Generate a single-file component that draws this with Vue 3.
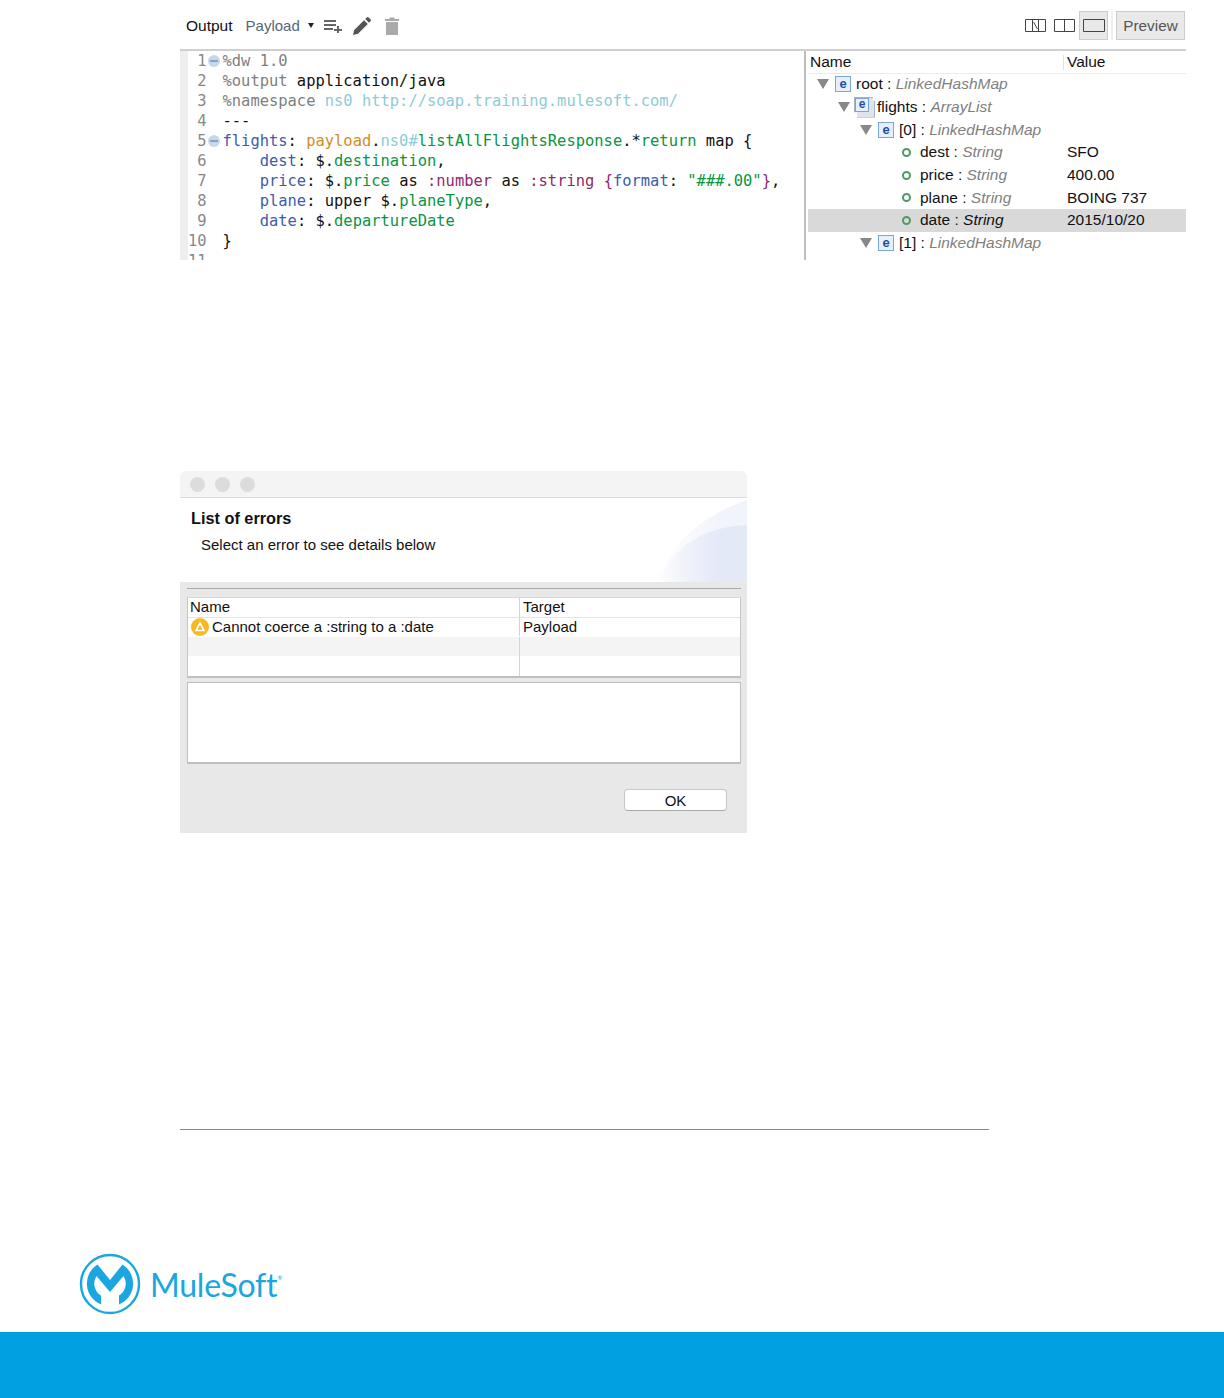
<script setup>
const code = [
  { n: '1', fold: true, t: [['g', '%dw 1.0']] },
  { n: '2', t: [['g', '%output '], ['k', 'application/java']] },
  { n: '3', t: [['g', '%namespace '], ['c', 'ns0 http://soap.training.mulesoft.com/']] },
  { n: '4', t: [['k', '---']] },
  { n: '5', fold: true, t: [['b', 'flights'], ['k', ': '], ['o', 'payload'], ['k', '.'], ['c', 'ns0'], ['c', '#'], ['v', 'listAllFlightsResponse'], ['k', '.*'], ['v', 'return'], ['k', ' map {']] },
  { n: '6', t: [['k', '    '], ['b', 'dest'], ['k', ': $.'], ['v', 'destination'], ['k', ',']] },
  { n: '7', t: [['k', '    '], ['b', 'price'], ['k', ': $.'], ['v', 'price'], ['k', ' as '], ['p', ':number'], ['k', ' as '], ['p', ':string {'], ['b', 'format'], ['k', ': '], ['v', '"###.00"'], ['p', '}'], ['k', ',']] },
  { n: '8', t: [['k', '    '], ['b', 'plane'], ['k', ': upper $.'], ['v', 'planeType'], ['k', ',']] },
  { n: '9', t: [['k', '    '], ['b', 'date'], ['k', ': $.'], ['v', 'departureDate']] },
  { n: '10', t: [['k', '}']] },
  { n: '11', t: [] },
]
const tree = [
  { icon: 'e', arrow: true, indent: 9, name: 'root', type: 'LinkedHashMap' },
  { icon: 'list', arrow: true, indent: 30, name: 'flights', type: 'ArrayList' },
  { icon: 'e', arrow: true, indent: 52, name: '[0]', type: 'LinkedHashMap' },
  { icon: 'dot', indent: 94, name: 'dest', type: 'String', value: 'SFO' },
  { icon: 'dot', indent: 94, name: 'price', type: 'String', value: '400.00' },
  { icon: 'dot', indent: 94, name: 'plane', type: 'String', value: 'BOING 737' },
  { icon: 'dot', indent: 94, name: 'date', type: 'String', value: '2015/10/20', selected: true },
  { icon: 'e', arrow: true, indent: 52, name: '[1]', type: 'LinkedHashMap' },
  { icon: 'dot', indent: 94, name: 'dest', type: 'String', value: 'LAX' },
]
</script>

<template>
  <div class="page">
    <section class="shot">
      <div class="toolbar">
        <span class="out">Output</span>
        <span class="payload">Payload</span>
        <span class="caret"></span>
        <svg class="ic add" width="19" height="14" viewBox="0 0 19 14"><path d="M0 1h12v2H0zM0 5h12v2H0zM0 9h9v2H0zM13 7h2v3h3v2h-3v2h-2v-2h-3v-2h3z" fill="#666"/></svg>
        <svg class="ic pen" width="18" height="18" viewBox="0 0 18 18"><path d="M0 18l1.200-5L11 3.200l3.800 3.800L5 16.800zM12.200 2L14 .3a1 1 0 0 1 1.400 0l2.300 2.300a1 1 0 0 1 0 1.400L16 5.800z" fill="#555"/></svg>
        <svg class="ic bin" width="14" height="18" viewBox="0 0 14 18"><path d="M0 2h4.500V.5h5V2H14v2H0zM1 5h12v13H1z" fill="#aaa"/></svg>
        <div class="spacer"></div>
        <svg class="view" width="21" height="13" viewBox="0 0 21 13"><path d="M.5.5h20v12H.5zM7.500.5v12M13.500.5v12M8.500 3l4 7" fill="none" stroke="#444"/></svg>
        <svg class="view v2" width="21" height="13" viewBox="0 0 21 13"><path d="M.5.5h20v12H.5zM10.500.5v12" fill="none" stroke="#444"/></svg>
        <div class="selected-view"><svg width="22" height="13" viewBox="0 0 22 13"><path d="M.5.5h21v12H.5z" fill="none" stroke="#444"/></svg></div>
        <div class="divider"></div>
        <div class="preview">Preview</div>
      </div>
      <div class="panes">
        <div class="editor">
          <div v-for="l in code" :key="l.n" class="cl">
            <span class="num">{{ l.n }}</span>
            <span class="fold"><i v-if="l.fold"></i></span>
            <span class="src"><span v-for="(s, i) in l.t" :key="i" :class="'t-' + s[0]">{{ s[1] }}</span></span>
          </div>
        </div>
        <div class="tree">
          <div class="thead"><span class="tname">Name</span><span class="tval">Value</span></div>
          <div v-for="(r, i) in tree" :key="i" class="row" :class="{ sel: r.selected }">
            <div class="rname" :style="{ paddingLeft: r.indent + 'px' }">
              <span v-if="r.arrow" class="tri"></span>
              <span v-if="r.icon === 'e'" class="elem">e</span>
              <span v-else-if="r.icon === 'list'" class="list"><span class="elem small">e</span></span>
              <span v-else class="dot"></span>
              <span class="lbl">{{ r.name }} : <em>{{ r.type }}</em></span>
            </div>
            <div class="rval">{{ r.value }}</div>
          </div>
        </div>
      </div>
    </section>

    <section class="dialog">
      <div class="titlebar"><i></i><i></i><i></i></div>
      <div class="dhead">
        <h3>List of errors</h3>
        <p>Select an error to see details below</p>
        <svg class="swoosh" width="92" height="84" viewBox="0 0 92 84">
          <defs>
            <linearGradient id="sw" x1="0" x2="1" y1="0" y2="0"><stop offset="0" stop-color="#e6ebf8" stop-opacity="0"/><stop offset=".7" stop-color="#e4e9f8"/></linearGradient>
          </defs>
          <path d="M0 84C14 50 44 18 92 2V84z" fill="url(#sw)" opacity=".5"/>
          <path d="M2 84C18 46 54 28 92 27V84z" fill="url(#sw)"/>
        </svg>
      </div>
      <div class="dbody">
        <div class="rule"></div>
        <div class="table">
          <div class="tr head"><span class="c1">Name</span><span class="c2">Target</span></div>
          <div class="tr main">
            <span class="c1 err">
              <svg width="18" height="18" viewBox="0 0 18 18"><circle cx="9" cy="9" r="9" fill="#f5b921"/><path d="M9 5l4 7.500H5z" fill="none" stroke="#fff" stroke-width="1.600"/></svg>
              Cannot coerce a :string to a :date
            </span>
            <span class="c2">Payload</span>
          </div>
          <div class="tr alt"><span class="c1"></span><span class="c2"></span></div>
          <div class="tr last"><span class="c1"></span><span class="c2"></span></div>
        </div>
        <div class="details"></div>
        <div class="actions"><button class="ok">OK</button></div>
      </div>
    </section>

    <div class="hr"></div>

    <div class="logo">
      <svg width="62" height="62" viewBox="0 0 62 62">
        <circle cx="31" cy="31" r="29" fill="none" stroke="#1ba6e0" stroke-width="2.400"/>
        <path d="M22 51.500A22.500 22.500 0 0 1 18.500 11.500L31 27l12.500-15.500A22.500 22.500 0 0 1 40 51.500V42.500A14 14 0 0 0 44.500 23L31 39 17.500 23A14 14 0 0 0 22 42.500z" fill="#1ba6e0"/>
      </svg>
      <span class="brand">MuleSoft<sup>®</sup></span>
    </div>
    <div class="bar"></div>
  </div>
</template>

<style scoped>
.page { width: 1224px; height: 1398px; background: #fff; display: flex; flex-direction: column; font-family: "Liberation Sans", Arial, sans-serif; color: #111; overflow: hidden; }
.shot { margin-left: 180px; width: 1006px; height: 260px; display: flex; flex-direction: column; }
.toolbar { height: 50px; flex: none; display: flex; align-items: center; font-size: 15px; box-sizing: border-box; padding-top: 1px; }
.out { margin-left: 6px; font-size: 15.500px; }
.payload { margin-left: 13px; color: #56667a; }
.caret { margin-left: 8px; width: 0; height: 0; border: 3.500px solid transparent; border-top: 5px solid #222; border-bottom: 0; }
.ic.add { margin-left: 10px; }
.ic.pen { margin-left: 10px; }
.ic.bin { margin-left: 14px; }
.spacer { flex: 1; }
.view { display: block; }
.v2 { margin-left: 8px; }
.selected-view { margin-left: 4px; width: 29px; height: 29px; box-sizing: border-box; background: #e8e8e8; border: 1px solid #ccc; display: flex; align-items: center; justify-content: center; }
.divider { margin-left: 3px; width: 2px; height: 29px; background: #eee; }
.preview { margin-left: 3px; margin-right: 1px; width: 69px; height: 29px; box-sizing: border-box; background: #e9e9e9; border: 1px solid #ccc; display: flex; align-items: center; justify-content: center; color: #555; font-size: 15.300px; }

.panes { flex: 1; min-height: 0; display: flex; border-top: 2px solid #cfcfcf; margin-top: -1px; overflow: hidden; }
.editor { width: 624px; flex: none; box-sizing: border-box; border-left: 8px solid #eeeeee; font-family: "DejaVu Sans Mono", monospace; font-size: 15.450px; }
.cl { display: flex; height: 20px; line-height: 20px; white-space: pre; }
.num { width: 18.500px; text-align: right; color: #888; flex: none; }
.fold { width: 16px; flex: none; display: flex; align-items: center; padding-left: 1px; box-sizing: border-box; }
.fold i { display: block; width: 12px; height: 12px; border-radius: 50%; background: #c6d9ec linear-gradient(#86a3c4, #86a3c4) center / 8px 2px no-repeat; }
.t-g { color: #7f7f7f; }
.t-k { color: #111; }
.t-c { color: #8ecbd6; }
.t-b { color: #3d5cac; }
.t-o { color: #d28d26; }
.t-v { color: #0a9440; }
.t-p { color: #8f2a6e; }

.tree { flex: 1; min-width: 0; border-left: 2px solid #bdbdbd; padding-left: 2px; font-size: 15.500px; }
.thead { display: flex; height: 21px; border-bottom: 1px solid #ececec; padding-top: 1px; box-sizing: content-box; }
.tname { width: 256px; padding-left: 2px; box-sizing: border-box; line-height: 20px; position: relative; }
.tname::after { content: ""; position: absolute; right: 0; top: 3px; width: 1px; height: 15px; background: #e2e2e2; }
.tval { padding-left: 3px; line-height: 20px; }
.row { display: flex; height: 22.700px; align-items: center; }
.row:nth-child(2) { margin-top: -1px; }
.row.sel { background: #d9d9d9; }
.rname { width: 260px; display: flex; align-items: center; box-sizing: border-box; flex: none; white-space: nowrap; }
.rval { white-space: nowrap; margin-left: -1px; }
.tri { width: 0; height: 0; border-left: 6px solid transparent; border-right: 6px solid transparent; border-top: 10px solid #888; margin-right: 6px; }
.elem { width: 16px; height: 16px; box-sizing: border-box; border: 1px solid #7aa6d8; background: #e6f0fb; color: #1f4fa0; font-size: 13px; font-weight: 700; line-height: 13px; text-align: center; display: block; margin-right: 5px; flex: none; }
.list { position: relative; width: 21px; height: 21px; margin-left: -2px; margin-right: 2px; background: #dfe4ec; border: 1px solid #a9b2c0; box-sizing: border-box; flex: none; clip-path: polygon(0 0, 90% 0, 90% 20%, 100% 20%, 100% 100%, 15% 100%, 15% 75%, 0 75%); }
.elem.small { position: absolute; left: 0; top: 0; width: 14px; height: 14px; font-size: 12px; line-height: 11px; margin: 0; }
.dot { width: 9px; height: 9px; box-sizing: border-box; border: 2.500px solid #4c9a66; border-radius: 50%; margin-right: 9px; flex: none; }
.lbl em { color: #808080; font-style: italic; }
.row.sel em { color: #111; }

.dialog { margin-top: 211px; margin-left: 180px; width: 567px; height: 362px; flex: none; display: flex; flex-direction: column; border-radius: 6px 6px 0 0; overflow: hidden; font-size: 15px; }
.titlebar { height: 27px; flex: none; box-sizing: border-box; background: #f4f4f4; border-bottom: 1px solid #dcdcdc; display: flex; align-items: center; gap: 10px; padding-left: 10px; }
.titlebar i { width: 15px; height: 15px; border-radius: 50%; background: #dcdcdc; }
.dhead { height: 84px; flex: none; position: relative; background: #fff; overflow: hidden; }
.dhead h3 { margin: 11px 0 0 11px; font-size: 16.300px; line-height: 18px; font-weight: 700; }
.dhead p { margin: 9px 0 0 21px; line-height: 18px; }
.swoosh { position: absolute; right: 0; top: 0; display: block; }
.dbody { flex: 1; background: #e8e8e8; padding: 6px 6px 0 7px; display: flex; flex-direction: column; }
.rule { height: 1px; background: #a8a8a8; margin-bottom: 8px; }
.table { height: 81px; box-sizing: border-box; border: 1px solid #c6c6c6; border-top: 1px solid #d8d8d8; border-bottom: 2px solid #c0c0c0; background: #fff; display: flex; flex-direction: column; }
.tr { display: flex; height: 20px; flex: none; line-height: 18px; }
.tr.head { border-bottom: 1px solid #e4e4e4; height: 20px; box-sizing: border-box; }
.tr.main { height: 19px; }
.tr.alt { background: #f4f4f4; height: 19px; }
.tr.last { flex: 1; }
.c1 { width: 332px; padding-left: 2px; box-sizing: border-box; border-right: 1px solid #d4d4d4; flex: none; }
.c2 { padding-left: 3px; }
.err { display: flex; align-items: center; gap: 3px; padding-left: 3px; white-space: nowrap; height: 18px; }
.details { height: 82px; margin-top: 4px; box-sizing: border-box; border: 1px solid #bfbfbf; border-bottom-width: 2px; background: #fff; }
.actions { display: flex; justify-content: flex-end; padding: 25px 14px 0 0; }
.ok { width: 103px; height: 22px; padding: 0; background: #fff; border: 1px solid #c8c8c8; border-bottom-color: #aaa; border-radius: 4px; font: 15px "Liberation Sans", Arial, sans-serif; color: #111; }

.hr { margin: 296px 0 0 180px; width: 809px; height: 1px; background: #888; flex: none; }
.logo { margin: 123px 0 0 79px; height: 62px; display: flex; align-items: center; gap: 9px; flex: none; }
.logo svg { display: block; }
.brand { font-family: Lato, sans-serif; font-size: 32px; color: #1ba6e0; letter-spacing: -.2px; position: relative; }
.brand sup { font-size: 6px; position: absolute; top: 9px; }
.bar { margin-top: 17px; flex: 1; background: #00a1e0; }
</style>
